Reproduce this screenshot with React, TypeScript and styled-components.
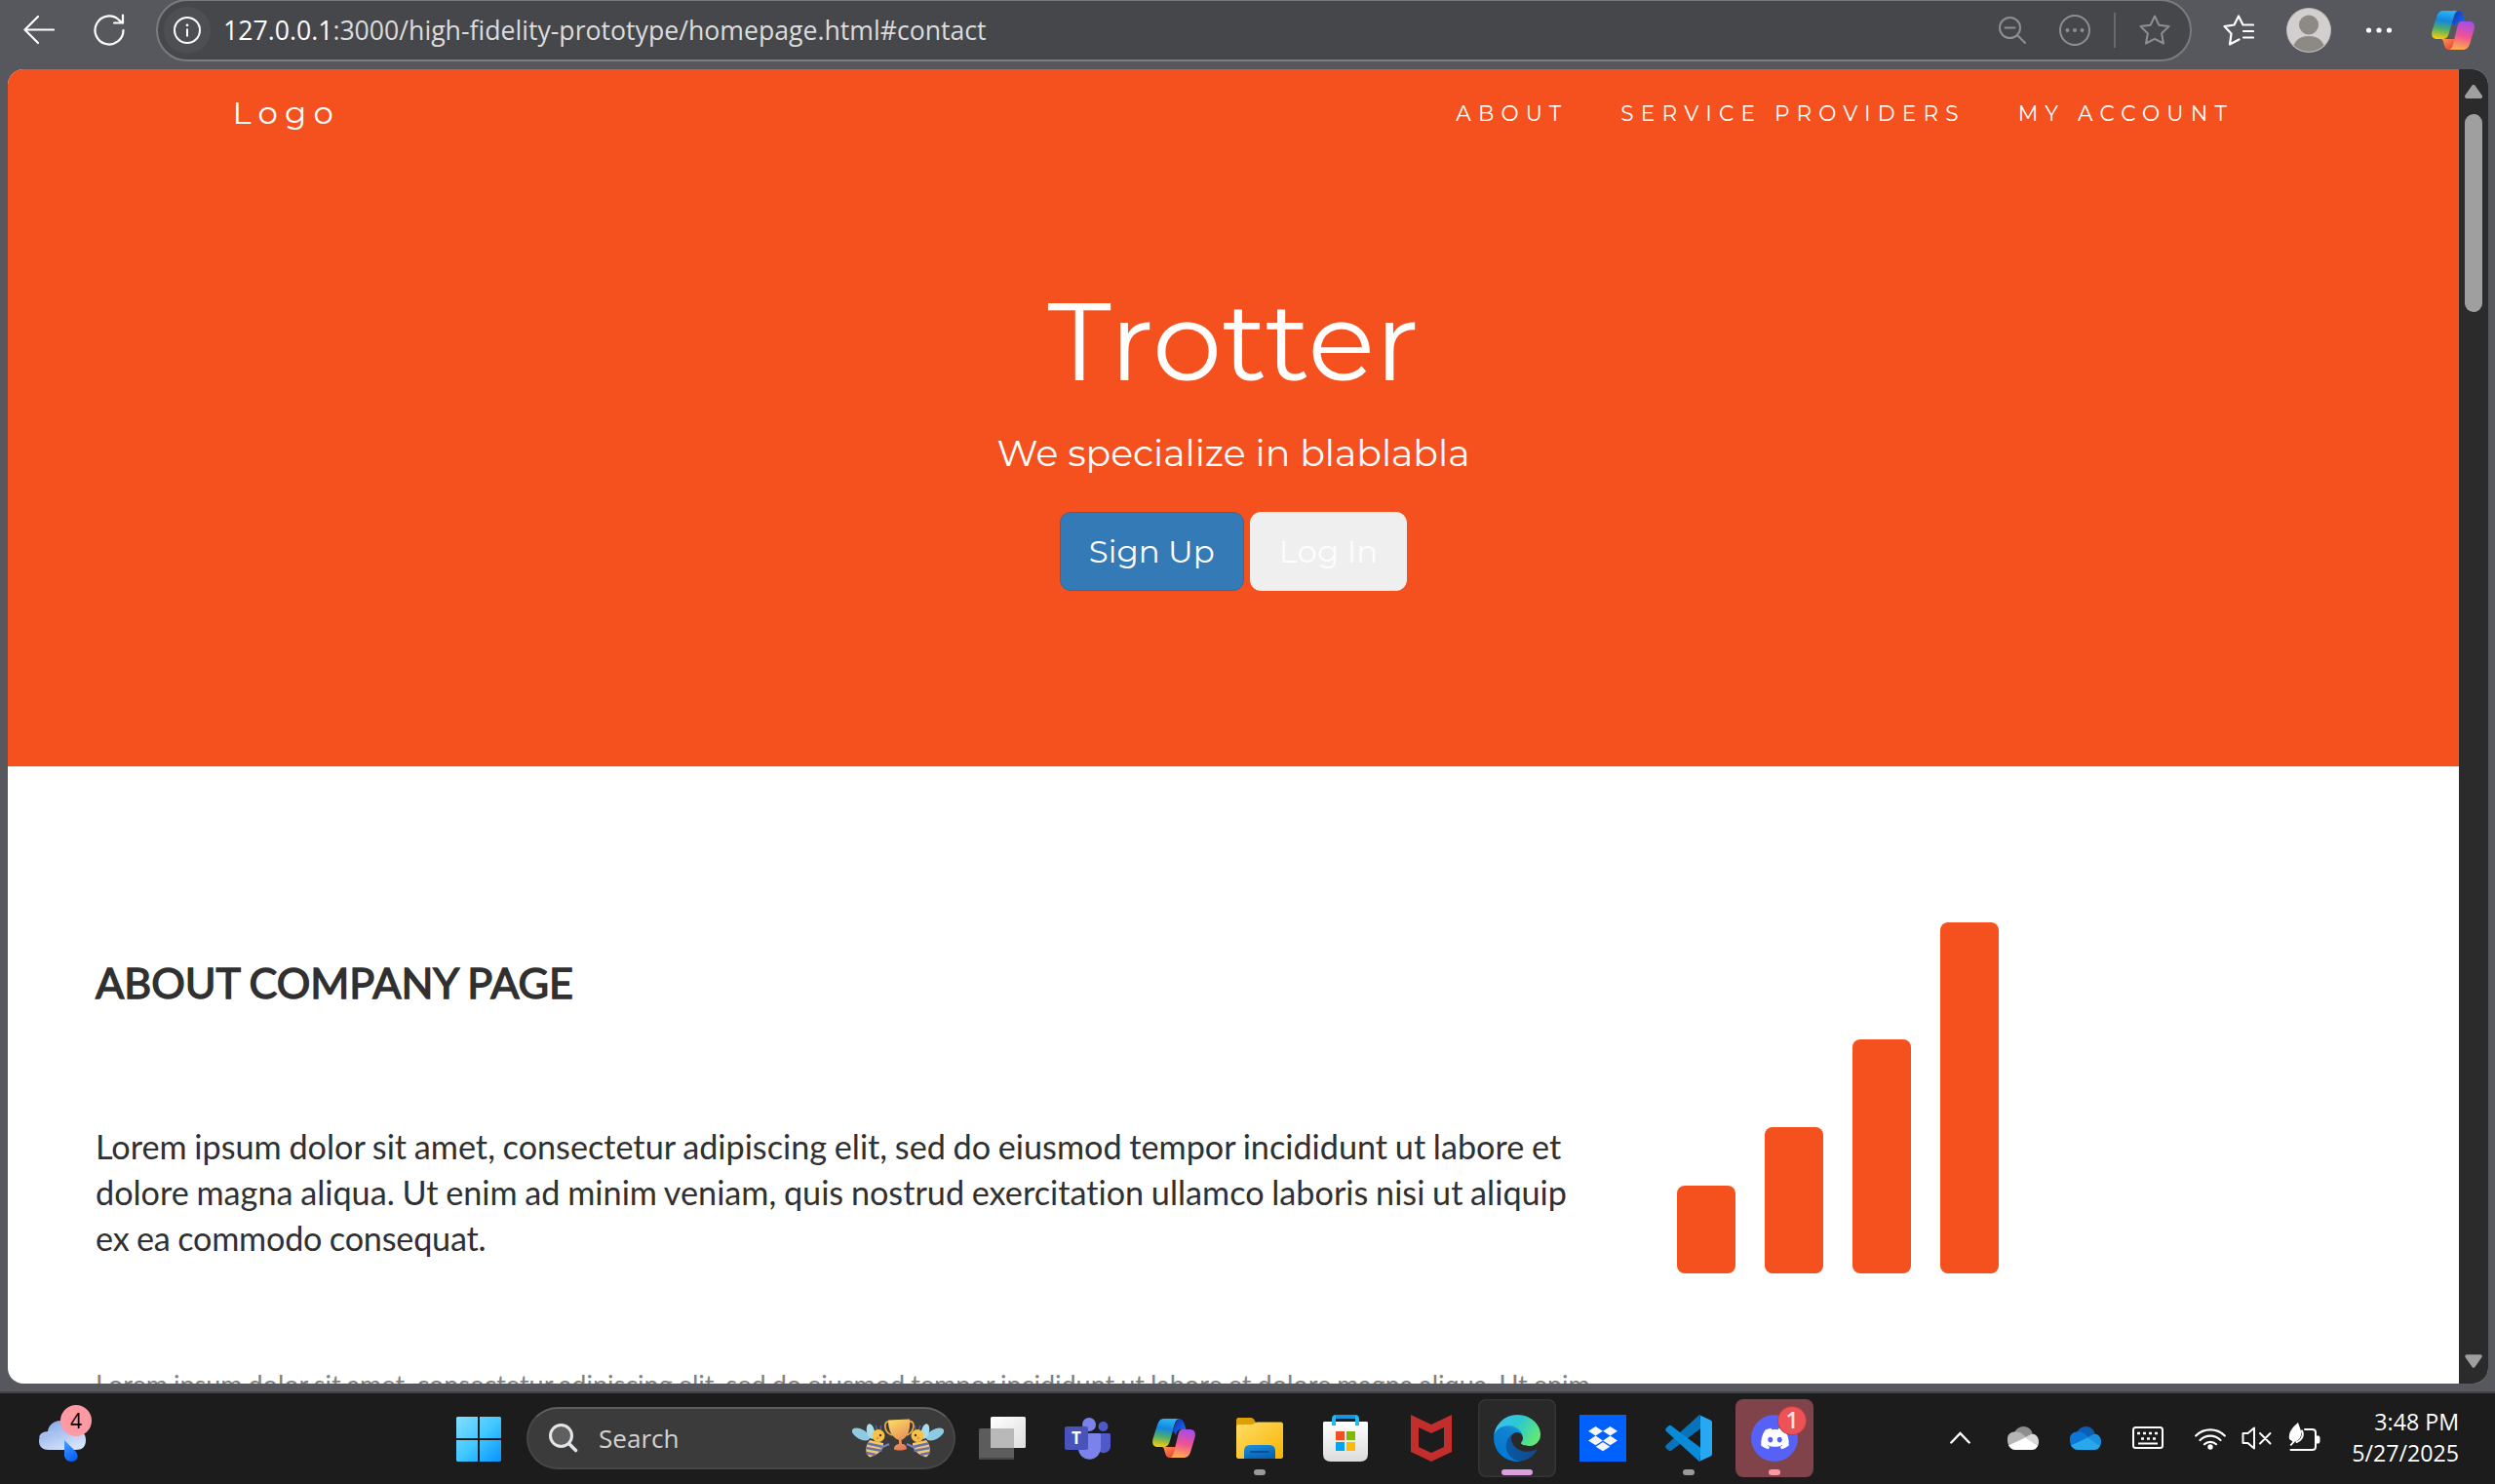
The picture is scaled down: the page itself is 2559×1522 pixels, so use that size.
import React from 'react';
import styled, { createGlobalStyle } from 'styled-components';
import { FaDiscord } from 'react-icons/fa';

const orange = '#f4511e';
const display = "Montserrat, Lato, 'Open Sans', sans-serif";
const system = "'Segoe UI', 'Open Sans', 'Noto Sans', sans-serif";

const GlobalStyle = createGlobalStyle`
  * { box-sizing: border-box; }
  html, body { margin: 0; padding: 0; overflow: hidden; background: #1c1c1c; }
  svg { display: block; flex: none; }
`;

const Screen = styled.div`
  width: 2559px;
  height: 1522px;
  display: flex;
  flex-direction: column;
  overflow: hidden;
`;

/* ---------- browser ---------- */
const Browser = styled.div`
  height: 1427px;
  flex: none;
  display: flex;
  flex-direction: column;
  background: #57585d;
`;

const Toolbar = styled.header`
  height: 71px;
  flex: none;
  display: flex;
  align-items: flex-start;
  padding-left: 24px;
`;

const Tool = styled.div<{ $w: number; $gap: number }>`
  width: ${(p) => p.$w}px;
  height: 62px;
  margin-left: ${(p) => p.$gap}px;
  display: flex;
  align-items: center;
  justify-content: center;
`;

const AddressBar = styled.div`
  width: 2088px;
  height: 64px;
  margin: -1px 0 0 32px;
  padding-left: 6px;
  border: 2px solid #7a7b7f;
  border-radius: 32px;
  background: #46474b;
  display: flex;
  align-items: center;
`;

const InfoButton = styled.div`
  width: 48px;
  height: 48px;
  border-radius: 50%;
  background: #4e4f53;
  display: flex;
  align-items: center;
  justify-content: center;
`;

const Url = styled.div`
  margin-left: 13px;
  flex: 1;
  color: #dcdcdc;
  font: 26.65px/40px ${system};
  white-space: nowrap;
  b { font-weight: 400; color: #fff; }
`;

const BarTool = styled.div<{ $mr: number }>`
  margin-right: ${(p) => p.$mr}px;
`;

const Divider = styled.div`
  width: 2px;
  height: 36px;
  margin-right: 24px;
  background: #69696a;
`;

const Viewport = styled.div`
  width: 2544px;
  height: 1348px;
  margin-left: 8px;
  display: flex;
  border-radius: 16px;
  overflow: hidden;
  background: #fff;
`;

const Page = styled.main`
  width: 2514px;
  overflow: hidden;
`;

const Scrollbar = styled.div`
  width: 30px;
  background: #2b2b2b;
  display: flex;
  flex-direction: column;
  align-items: center;
  padding: 16px 0;
`;

const Thumb = styled.div`
  width: 18px;
  height: 203px;
  margin: 16px 0 auto;
  border-radius: 9px;
  background: #9f9f9f;
`;

/* ---------- page ---------- */
const Hero = styled.section`
  height: 715px;
  background: ${orange};
  color: #fff;
  font-family: ${display};
`;

const Nav = styled.nav`
  height: 90px;
  padding: 0 231px 0 230.5px;
  display: flex;
  align-items: center;
  letter-spacing: 7.2px;
`;

const Logo = styled.span`
  font-size: 32.4px;
  line-height: 88px;
  margin-right: auto;
`;

const NavLink = styled.a`
  font-size: 21.6px;
  line-height: 90px;
  margin-left: 54px;
  white-space: nowrap;
`;

const HeroBody = styled.div`
  display: flex;
  flex-direction: column;
  align-items: center;
  padding-top: 123px;
`;

const Title = styled.h1`
  margin: 0;
  font-size: 113.4px;
  font-weight: 400;
  line-height: 130px;
`;

const Tagline = styled.p`
  margin: 25px 0 0;
  font-size: 37.8px;
  line-height: 50px;
`;

const Actions = styled.div`
  margin-top: 36px;
  display: flex;
  gap: 6.5px;
`;

const Button = styled.button<{ $primary?: boolean }>`
  width: ${(p) => (p.$primary ? 188.5 : 161)}px;
  height: 81px;
  padding: 0;
  border: 1px solid ${(p) => (p.$primary ? '#2e6da4' : '#efefef')};
  border-radius: 11px;
  background: ${(p) => (p.$primary ? '#337ab7' : '#efefef')};
  color: ${(p) => (p.$primary ? '#fff' : '#fdfdfd')};
  font: 32.4px/78px ${display};
  white-space: nowrap;
`;

const About = styled.section`
  display: flex;
  padding: 160px 0 0 90px;
  font-family: Lato, sans-serif;
  font-variant-ligatures: none;
`;

const Copy = styled.div`
  width: 1622px;
  padding-top: 31px;
`;

const Heading = styled.h2`
  margin: 0;
  color: #303030;
  font-size: 43.2px;
  font-weight: 400;
  line-height: 60px;
  word-spacing: -1.3px;
  -webkit-text-stroke: 1.4px #303030;
`;

const Lead = styled.p`
  margin: 114.5px 0 0;
  color: #303030;
  font-size: 34.2px;
  line-height: 47.03px;
  word-spacing: -0.03em;
  white-space: nowrap;
`;

const LastLine = styled.span`
  letter-spacing: -0.2px;
`;

const Body = styled.p`
  margin: 103px 0 0;
  color: #818181;
  font-size: 27px;
  line-height: 48.6px;
  word-spacing: -0.034em;
  white-space: nowrap;
`;

const Bars = styled.div`
  height: 360px;
  display: flex;
  align-items: flex-end;
  gap: 30px;
`;

const Bar = styled.div<{ $h: number }>`
  width: 60px;
  height: ${(p) => p.$h}px;
  border-radius: 8px;
  background: ${orange};
`;

/* ---------- taskbar ---------- */
const Taskbar = styled.footer`
  height: 95px;
  flex: none;
  display: flex;
  align-items: center;
  background: #1c1c1c;
  border-top: 2px solid #434346;
  font-family: ${system};
  color: #fff;
`;

const Weather = styled.div`
  width: 60px;
  margin: 0 372px 9px 36px;
`;

const SearchBox = styled.div`
  width: 440px;
  height: 64px;
  margin: 0 8px 1px 26px;
  padding: 0 10px 0 21px;
  border: 2px solid #474747;
  border-top-color: #5f5f5f;
  border-radius: 32px;
  background: #3b3b3b;
  display: flex;
  align-items: center;
`;

const SearchLabel = styled.span`
  margin: 0 auto 0 21px;
  font-size: 26.1px;
  line-height: 40px;
  color: #d2d2d2;
`;

const AppButton = styled.div<{ $state?: 'active' | 'alert' }>`
  position: relative;
  width: 80px;
  height: 80px;
  margin: 0 8px 1px 0;
  border-radius: 8px;
  display: flex;
  align-items: center;
  justify-content: center;
  background: ${(p) => (p.$state === 'active' ? '#292929' : p.$state === 'alert' ? '#80434a' : 'none')};
  box-shadow: ${(p) => (p.$state === 'active' ? 'inset 0 0 0 1.5px #353535' : 'none')};
`;

const Indicator = styled.i<{ $w: number; $c: string }>`
  position: absolute;
  left: calc(50% - ${(p) => p.$w / 2}px);
  bottom: 2px;
  width: ${(p) => p.$w}px;
  height: 6px;
  border-radius: 3px;
  background: ${(p) => p.$c};
`;

const DiscordDisc = styled.div`
  width: 48px;
  height: 48px;
  border-radius: 50%;
  background: #5662f6;
  display: flex;
  align-items: center;
  justify-content: center;
`;

const AlertBadge = styled.span`
  position: absolute;
  left: 44px;
  top: 8px;
  width: 28px;
  height: 28px;
  border-radius: 50%;
  background: #ed5257;
  box-shadow: 0 0 0 1px #b93f46;
  font: 600 23px/27px ${system};
  text-align: center;
  color: #fbe3e3;
`;

const Tray = styled.div`
  margin-left: 132px;
  display: flex;
  align-items: center;
`;

const TrayIcon = styled.div<{ $gap: number }>`
  margin: 0 ${(p) => p.$gap}px 2px 0;
`;

const Clock = styled.div`
  width: 109px;
  margin-bottom: 3px;
  display: flex;
  flex-direction: column;
  align-items: flex-end;
  font-size: 23.2px;
  line-height: 32px;
  white-space: nowrap;
`;

const CopilotIcon = ({ id }: { id: string }) => (
  <svg width="44" height="40" viewBox="0 0 44 40">
    <defs>
      <linearGradient id={`${id}a`} x1="0.5" y1="0" x2="0.35" y2="1">
        <stop offset="0" stopColor="#2bb4f5" />
        <stop offset="0.35" stopColor="#1486dd" />
        <stop offset="0.65" stopColor="#4fae6a" />
        <stop offset="1" stopColor="#f7cb0b" />
      </linearGradient>
      <linearGradient id={`${id}b`} x1="0.6" y1="0" x2="0.4" y2="1">
        <stop offset="0" stopColor="#a44ee8" />
        <stop offset="0.5" stopColor="#ee5293" />
        <stop offset="1" stopColor="#ffb04a" />
      </linearGradient>
      <linearGradient id={`${id}c`} x1="0" y1="0" x2="1" y2="1">
        <stop offset="0" stopColor="#0a2fbf" />
        <stop offset="1" stopColor="#2273ea" />
      </linearGradient>
      <linearGradient id={`${id}d`} x1="0" y1="0" x2="1" y2="1">
        <stop offset="0" stopColor="#ff9a4d" />
        <stop offset="1" stopColor="#e8363a" />
      </linearGradient>
    </defs>
    <path d="M26 0C31 0 32 3 33 6L34.500 11H30C26 11 25 13 24 17L21 12Z" fill={`url(#${id}c)`} />
    <path d="M9.500 29C12 29 12 32 13 35C14 38.500 15 40 18 40L23 38L24 29Z" fill={`url(#${id}d)`} />
    <path d="M12 0H28C24.500 0 23.500 3 22.500 6.500L18 22.500C16.500 27.500 15 29 11 29H6C1 29-1 26 0.700 20L5 6.500C6.500 2 8.500 0 12 0Z" fill={`url(#${id}a)`} />
    <path d="M31 11H38C43 11 45 14 43.300 20L39.300 33.500C38 38 35.500 40 32 40H17C20.500 40 21.300 37 22.200 33.500L26 18C27.200 13 28 11 31 11Z" fill={`url(#${id}b)`} />
  </svg>
);

const CloudIcon = ({ c }: { c: string[] }) => (
  <svg width="32" height="24" viewBox="0 0 32 24">
    <path d="M7 7C8 3 12 0 16.500 0C21 0 24.500 3 25.500 7L18 12Z" fill={c[0]} />
    <path d="M7 5.500C10 5 13 6 15.500 8L20 11.500L1.500 20C-2 13 0 6 7 5.500Z" fill={c[1]} />
    <path d="M17 12L24.500 7.500C29 7.500 32 11 32 15.500C32 17.500 31.500 19.500 30.500 21Z" fill={c[2]} />
    <path d="M18 11.500L30.800 20C29.500 23 27.500 24 25 24H8C5 24 2.500 22 1 19.500Z" fill={c[3]} />
  </svg>
);

const Bee = () => (
  <g>
    <ellipse cx="9" cy="16" rx="10" ry="5" transform="rotate(28 9 16)" fill="#8ecbe2" />
    <ellipse cx="19" cy="13" rx="4" ry="8" transform="rotate(-12 19 13)" fill="#a9dcec" />
    <path d="M26 12L24 7M29 12L29.500 7" stroke="#5a62a0" strokeWidth="1.200" />
    <path d="M18 22L32 25C33 32 26 37 18 39.500C13 36 13 28 18 22Z" fill="#f6c869" />
    <path d="M16 25.500L32 29M14.500 30L30.500 33M14.500 35L24 37" stroke="#6672ae" strokeWidth="2.600" />
    <path d="M29 30L38 26" stroke="#7480c4" strokeWidth="2" />
    <circle cx="27" cy="17.500" r="6.500" fill="#f8c243" />
    <circle cx="29" cy="17" r="1.200" fill="#3b3041" />
    <circle cx="26" cy="20" r="1.300" fill="#ef8a62" />
  </g>
);

const BeesTrophy = () => (
  <svg width="94" height="40" viewBox="0 0 94 40">
    <defs>
      <linearGradient id="cup" x1="0.300" y1="0" x2="0.700" y2="1">
        <stop offset="0" stopColor="#fbd661" />
        <stop offset="1" stopColor="#e0765a" />
      </linearGradient>
    </defs>
    <Bee />
    <g transform="translate(94 0) scale(-1 1)"><Bee /></g>
    <path d="M38 3C32 2 32 14 41 17M58 3C65 1 65 13 56 17" fill="none" stroke="#e8a548" strokeWidth="1.800" />
    <path d="M37 1.500L59 0.500C60 12 57 19 50.500 22L51 26C54 26 56 28 56 31C52 33 46 33 43 31.500C43 28 45 26.500 48 26L48 22C40 19 37 11 37 1.500Z" fill="url(#cup)" />
  </svg>
);

export default function App() {
  return (
    <Screen>
      <GlobalStyle />
      <Browser>
        <Toolbar>
          <Tool $w={32} $gap={0}>
            <svg width="32" height="30" viewBox="0 0 32 30" fill="none" stroke="#fff" strokeWidth="2.200" strokeLinecap="round" strokeLinejoin="round">
              <path d="M31 14.500H1.500M15 1L1.500 14.500L15 28" />
            </svg>
          </Tool>
          <Tool $w={32} $gap={40}>
            <svg width="32" height="34" viewBox="0 0 32 34" fill="none" stroke="#fff" strokeWidth="2.200" strokeLinecap="round">
              <path d="M30.500 17A14.500 14.500 0 1 1 26 6.500L29.500 9.500M30 1.500V9.500H21" />
            </svg>
          </Tool>
          <AddressBar>
            <InfoButton>
              <svg width="28" height="28" viewBox="0 0 28 28" fill="none" stroke="#fff" strokeWidth="2">
                <circle cx="14" cy="14" r="13" />
                <path d="M14 12.500V20.500" />
                <circle cx="14" cy="8.800" r="1.400" fill="#fff" stroke="none" />
              </svg>
            </InfoButton>
            <Url><b>127.0.0.1</b>:3000/high-fidelity-prototype/homepage.html#contact</Url>
            <BarTool $mr={34}>
              <svg width="28" height="28" viewBox="0 0 28 28" fill="none" stroke="#8f8f90" strokeWidth="2" strokeLinecap="round">
                <circle cx="11.500" cy="11.500" r="10.500" />
                <path d="M6.500 11.500H16.500M19 19L27 27" />
              </svg>
            </BarTool>
            <BarTool $mr={24}>
              <svg width="32" height="32" viewBox="0 0 32 32" fill="none" stroke="#8f8f90" strokeWidth="2">
                <circle cx="16" cy="16" r="15" />
                <g fill="#8f8f90" stroke="none">
                  <circle cx="8.500" cy="16" r="2" /><circle cx="16" cy="16" r="2" /><circle cx="23.500" cy="16" r="2" />
                </g>
              </svg>
            </BarTool>
            <Divider />
            <BarTool $mr={20}>
              <svg width="32" height="32" viewBox="0 0 32 32" fill="none" stroke="#8f8f90" strokeWidth="2" strokeLinejoin="round">
                <path d="M16 1.500L20.400 10.700L30.500 12.100L23.100 19.200L25 29.500L16 24.800L7 29.500L8.900 19.200L1.500 12.100L11.600 10.700Z" />
              </svg>
            </BarTool>
          </AddressBar>
          <Tool $w={32} $gap={32}>
            <svg width="32" height="32" viewBox="0 0 32 32" fill="none" stroke="#fff" strokeWidth="2.200" strokeLinejoin="round" strokeLinecap="round">
              <path d="M31 10.500H20.500L16 1.500L11.500 10.500L1.500 12L8.500 19.500L7 30.500L16.500 25.500M21 17H31M21 23.500H31" />
            </svg>
          </Tool>
          <Tool $w={46} $gap={33}>
            <svg width="46" height="46" viewBox="0 0 46 46">
              <clipPath id="face"><circle cx="23" cy="23" r="22" /></clipPath>
              <circle cx="23" cy="23" r="23" fill="#c0bebb" />
              <circle cx="23" cy="23" r="22" fill="#d2d0ce" />
              <g clipPath="url(#face)" fill="#8d8985">
                <circle cx="23" cy="17.500" r="10" />
                <path d="M6 46C6 35 13 29 23 29C33 29 40 35 40 46Z" />
              </g>
            </svg>
          </Tool>
          <Tool $w={28} $gap={35}>
            <svg width="28" height="6" viewBox="0 0 28 6" fill="#fff">
              <circle cx="3.500" cy="3" r="2.600" /><circle cx="14" cy="3" r="2.600" /><circle cx="24.500" cy="3" r="2.600" />
            </svg>
          </Tool>
          <Tool $w={44} $gap={40}><CopilotIcon id="top" /></Tool>
        </Toolbar>
        <Viewport>
          <Page>
            <Hero>
              <Nav>
                <Logo>Logo</Logo>
                <NavLink>ABOUT</NavLink>
                <NavLink>SERVICE PROVIDERS</NavLink>
                <NavLink>MY ACCOUNT</NavLink>
              </Nav>
              <HeroBody>
                <Title>Trotter</Title>
                <Tagline>We specialize in blablabla</Tagline>
                <Actions>
                  <Button $primary>Sign Up</Button>
                  <Button>Log In</Button>
                </Actions>
              </HeroBody>
            </Hero>
            <About>
              <Copy>
                <Heading>ABOUT COMPANY PAGE</Heading>
                <Lead>
                  Lorem ipsum dolor sit amet, consectetur adipiscing elit, sed do eiusmod tempor incididunt ut labore et<br />
                  dolore magna aliqua. Ut enim ad minim veniam, quis nostrud exercitation ullamco laboris nisi ut aliquip<br />
                  <LastLine>ex ea commodo consequat.</LastLine>
                </Lead>
                <Body>Lorem ipsum dolor sit amet, consectetur adipiscing elit, sed do eiusmod tempor incididunt ut labore et dolore magna aliqua. Ut enim</Body>
              </Copy>
              <Bars>
                {[90, 150, 240, 360].map((h) => <Bar key={h} $h={h} />)}
              </Bars>
            </About>
          </Page>
          <Scrollbar>
            <svg width="18" height="14" viewBox="0 0 18 14"><path d="M9 2L16 12H2Z" fill="#9f9f9f" stroke="#9f9f9f" strokeWidth="4" strokeLinejoin="round" /></svg>
            <Thumb />
            <svg width="18" height="14" viewBox="0 0 18 14"><path d="M9 12L16 2H2Z" fill="#9f9f9f" stroke="#9f9f9f" strokeWidth="3.500" strokeLinejoin="round" /></svg>
          </Scrollbar>
        </Viewport>
      </Browser>
      <Taskbar>
        <Weather>
          <svg width="60" height="66" viewBox="0 0 60 66">
            <defs>
              <linearGradient id="cl" x1="0" y1="0" x2="0.600" y2="1"><stop offset="0" stopColor="#7fa2e6" /><stop offset="1" stopColor="#d5e3fa" /></linearGradient>
              <linearGradient id="dr" x1="0" y1="0" x2="0.500" y2="1"><stop offset="0" stopColor="#4aa0ff" /><stop offset="1" stopColor="#0b62f5" /></linearGradient>
            </defs>
            <path d="M14 49C8 49 4 46 4 40C4 34 8 31 13 31C13 24 19 19 26 19C32 19 37 23 38 28C46 27 52 31 52 39C52 46 48 49 42 49Z" fill="url(#cl)" />
            <path d="M5 36C7 30 19 28 25 37" fill="none" stroke="#a9c3f1" strokeWidth="2" />
            <path d="M30 39L42 51C46 57 42 61 37 61C33 61 30 58 30 54Z" fill="url(#dr)" />
            <circle cx="42" cy="19" r="16" fill="#ff99a4" />
            <text x="42" y="26.500" textAnchor="middle" fontFamily="Open Sans, sans-serif" fontSize="21" fill="#000">4</text>
          </svg>
        </Weather>
        <svg width="46" height="46" viewBox="0 0 46 46">
          <defs><linearGradient id="win" gradientUnits="userSpaceOnUse" x1="0" y1="0" x2="46" y2="46"><stop offset="0" stopColor="#85deff" /><stop offset="0.500" stopColor="#40c8ff" /><stop offset="1" stopColor="#0893ff" /></linearGradient></defs>
          <path d="M1 0H22V22H0V1ZM24 0H45L46 1V22H24ZM0 24H22V46H1L0 45ZM24 24H46V45L45 46H24Z" fill="url(#win)" />
        </svg>
        <SearchBox>
          <svg width="30" height="30" viewBox="0 0 30 30" fill="none" stroke="#e3e6e8" strokeLinecap="round">
            <circle cx="12.500" cy="12.500" r="11" strokeWidth="3" fill="#606060" />
            <path d="M21 21L27.500 27.500" strokeWidth="3.600" />
          </svg>
          <SearchLabel>Search</SearchLabel>
          <BeesTrophy />
        </SearchBox>
        <AppButton>
          <svg width="48" height="44" viewBox="0 0 48 44">
            <defs><linearGradient id="tv" x1="0" y1="0" x2="1" y2="1"><stop offset="0" stopColor="#fff" /><stop offset="1" stopColor="#dedede" /></linearGradient></defs>
            <rect x="12" width="36" height="32" rx="1.500" fill="url(#tv)" />
            <rect y="12" width="36" height="32" rx="1.500" fill="#5c5c5c" />
            <path d="M12 12H36V32H12Z" fill="#b9b9b9" />
            <path d="M0 42H36V43L35 44H1Z" fill="#474747" />
          </svg>
        </AppButton>
        <AppButton>
          <svg width="48" height="44" viewBox="0 0 48 44">
            <circle cx="39.500" cy="10" r="5" fill="#5059c9" />
            <path d="M34 17H45.500Q47 17 47 18.500V30A7 7 0 0 1 35 35Z" fill="#5059c9" />
            <circle cx="25" cy="8" r="7" fill="#7b83eb" />
            <path d="M14 17H35.500Q37 17 37 18.500V31.500A11.500 11.500 0 0 1 14 33Z" fill="#7b83eb" />
            <rect y="10" width="24" height="24" rx="2" fill="#4a52bb" />
            <text x="12" y="28" textAnchor="middle" fontFamily="Open Sans, sans-serif" fontWeight="700" fontSize="17" fill="#fff">T</text>
          </svg>
        </AppButton>
        <AppButton><CopilotIcon id="task" /></AppButton>
        <AppButton>
          <svg width="48" height="42" viewBox="0 0 48 42">
            <defs>
              <linearGradient id="fo" x1="0" y1="0" x2="1" y2="1"><stop offset="0" stopColor="#ffdc69" /><stop offset="1" stopColor="#f8b500" /></linearGradient>
              <linearGradient id="fb" x1="0" y1="0" x2="0.500" y2="1"><stop offset="0" stopColor="#1b93de" /><stop offset="1" stopColor="#0763b5" /></linearGradient>
            </defs>
            <path d="M0 1.500L1.500 0H15Q17 0 18 1.500L20 5V12H0Z" fill="#dd9f06" />
            <path d="M0 8.500L1.500 7H14Q17 7 19 5.500Q20 4.500 22 4.500H46.500L48 6V40.500L46.500 42H1.500L0 40.500Z" fill="url(#fo)" />
            <path d="M8 42V34Q8 28 14 28H34Q40 28 40 34V42Z" fill="url(#fb)" />
            <path d="M15 35H33" stroke="#0b4f98" strokeWidth="2" strokeLinecap="round" />
          </svg>
          <Indicator $w={12} $c="#999" />
        </AppButton>
        <AppButton>
          <svg width="46" height="48" viewBox="0 0 46 48">
            <defs><linearGradient id="bag" x1="0" y1="0" x2="0" y2="1"><stop offset="0" stopColor="#fff" /><stop offset="1" stopColor="#dcdcdc" /></linearGradient></defs>
            <path d="M1 7H45L46 8V40Q46 48 38 48H8Q0 48 0 40V8Z" fill="url(#bag)" />
            <path d="M11 11V4.500Q11 2 13 2H33Q35 2 35 4.500V11" fill="none" stroke="#1dbbf4" strokeWidth="4" />
            <path d="M13 2H33" stroke="#1594e3" strokeWidth="4" />
            <rect x="13" y="17" width="9" height="9" fill="#f25022" />
            <rect x="24" y="17" width="9" height="9" fill="#7fba00" />
            <rect x="13" y="28" width="9" height="9" fill="#00a4ef" />
            <rect x="24" y="28" width="9" height="9" fill="#ffb900" />
          </svg>
        </AppButton>
        <AppButton>
          <svg width="42" height="48" viewBox="0 0 42 48">
            <path fillRule="evenodd" d="M0 0L21 10L42 0V38L21 48L0 38ZM8 13V33L21 39L34 33V13L21 19Z" fill="#c12e2c" />
          </svg>
        </AppButton>
        <AppButton $state="active">
          <svg width="48" height="48" viewBox="4.600 4.900 256 256">
            <defs>
              <linearGradient id="e1" x1="0" y1="0.500" x2="1" y2="0.500"><stop offset="0" stopColor="#0c59a4" /><stop offset="1" stopColor="#114a8b" /></linearGradient>
              <linearGradient id="e2" x1="0.800" y1="0" x2="0.300" y2="1"><stop offset="0" stopColor="#1b9de2" /><stop offset="0.300" stopColor="#1280cf" /><stop offset="1" stopColor="#0078d4" /></linearGradient>
              <linearGradient id="e3" x1="0" y1="0.300" x2="1" y2="0.700"><stop offset="0" stopColor="#35c1f1" /><stop offset="0.450" stopColor="#2cc9cf" /><stop offset="1" stopColor="#66eb6e" /></linearGradient>
            </defs>
            <path fill="url(#e1)" d="M235.680 195.460a93.730 93.730 0 0 1-10.540 4.710 101.870 101.870 0 0 1-35.900 6.460c-47.320 0-88.540-32.550-88.540-74.320A31.480 31.480 0 0 1 117.130 105c-42.800 1.800-53.800 46.400-53.800 72.530 0 73.880 68.090 81.370 82.760 81.370 7.910 0 19.840-2.300 27-4.560l1.310-.44a128.340 128.340 0 0 0 66.600-52.800 4 4 0 0 0-5.320-5.640Z" />
            <path fill="url(#e2)" d="M110.340 246.340A79.200 79.200 0 0 1 87.600 225a80.720 80.720 0 0 1 29.530-120c3.120-1.470 8.450-4.130 15.540-4a32.350 32.350 0 0 1 25.690 13 31.880 31.880 0 0 1 6.360 18.660c0-.21 24.460-79.600-80-79.600-43.900 0-80 41.660-80 78.210a130.150 130.150 0 0 0 12.110 56 128 128 0 0 0 156.380 67.110 75.550 75.550 0 0 1-62.780-8Z" />
            <path fill="url(#e3)" d="M156.940 153.780c-.81 1.050-3.300 2.500-3.300 5.660 0 2.610 1.700 5.120 4.720 7.230 14.380 10 41.490 8.680 41.560 8.680a59.560 59.560 0 0 0 30.270-8.350 61.380 61.380 0 0 0 30.430-52.880c.26-22.410-8-37.310-11.340-43.910C228.090 28.760 182.350 4.920 132.610 4.920a128 128 0 0 0-128 126.200c.48-36.540 36.800-66.050 80-66.050 3.500 0 23.460.34 42 10.070 16.340 8.580 24.900 18.940 30.850 29.210 6.180 10.670 7.280 24.150 7.280 29.520s-2.740 13.330-7.800 19.910Z" />
          </svg>
          <Indicator $w={32} $c="#dc9fe0" />
        </AppButton>
        <AppButton>
          <svg width="48" height="48" viewBox="0 0 48 48">
            <rect width="48" height="48" fill="#0061ff" />
            <path d="M16.500 12L24 16.800L16.500 21.600L9 16.800ZM31.500 12L39 16.800L31.500 21.600L24 16.800ZM16.500 21.600L24 26.400L16.500 31.200L9 26.400ZM31.500 21.600L39 26.400L31.500 31.200L24 26.400ZM24 28L31.300 32.700L24 37.300L16.700 32.700Z" fill="#f7f5f2" />
          </svg>
        </AppButton>
        <AppButton>
          <svg width="48" height="48" viewBox="0 0 48 48">
            <path d="M35 0L1 31Q-.5 32.500 1 34.500L3.300 36.600Q4.800 37.800 6.500 36.600L37 13.500Z" fill="#0673ba" />
            <path d="M35 48L1 17Q-.5 15.500 1 13.500L3.300 11.400Q4.800 10.200 6.500 11.400L37 34.500Z" fill="#0a8bd8" />
            <path d="M34.500 0L46.500 5.500Q48 6.300 48 8V40Q48 41.700 46.500 42.500L34.500 48L36 46V2Z" fill="#27a8f2" />
          </svg>
          <Indicator $w={12} $c="#999" />
        </AppButton>
        <AppButton $state="alert">
          <DiscordDisc><FaDiscord size={31} color="#fff" /></DiscordDisc>
          <AlertBadge>1</AlertBadge>
          <Indicator $w={12} $c="#ff99a4" />
        </AppButton>
        <Tray>
          <TrayIcon $gap={38}>
            <svg width="21" height="13" viewBox="0 0 21 13" fill="none" stroke="#fff" strokeWidth="2.400" strokeLinecap="round"><path d="M1.300 11.500L10.500 2L19.700 11.500" /></svg>
          </TrayIcon>
          <TrayIcon $gap={32}><CloudIcon c={['#8d8d8d', '#b5b5b5', '#dadada', '#ffffff']} /></TrayIcon>
          <TrayIcon $gap={32}><CloudIcon c={['#0a5fb4', '#0a78d6', '#1a90e0', '#28a8ea']} /></TrayIcon>
          <TrayIcon $gap={32}>
            <svg width="32" height="24" viewBox="0 0 32 24" fill="none" stroke="#fff" strokeWidth="2">
              <rect x="1" y="1" width="30" height="21" rx="2.500" />
              <path d="M6 17.500H26" />
              <path d="M5 7H8M11 7H14M17 7H20M23 7H26M9 12.500H12M15 12.500H18M21 12.500H24" strokeWidth="2.600" />
            </svg>
          </TrayIcon>
          <TrayIcon $gap={16}>
            <svg width="32" height="24" viewBox="0 0 32 24" fill="none" stroke="#fff" strokeWidth="2.200" strokeLinecap="round">
              <path d="M1.200 9.500A20.900 20.900 0 0 1 30.800 9.500M5.500 14A14.800 14.800 0 0 1 26.500 14M10 18.300A8.500 8.500 0 0 1 22 18.300" />
              <circle cx="16" cy="21" r="2.700" fill="#fff" stroke="none" />
            </svg>
          </TrayIcon>
          <TrayIcon $gap={17}>
            <svg width="31" height="24" viewBox="0 0 31 24" fill="none" stroke="#fff" strokeWidth="2" strokeLinecap="round" strokeLinejoin="round">
              <path d="M13 1.500V22.500L6.500 17H1.500V7H6.500ZM19 7L29.500 17.500M29.500 7L19 17.500" />
            </svg>
          </TrayIcon>
          <TrayIcon $gap={33}>
            <svg width="33" height="34" viewBox="0 0 33 34" fill="none" stroke="#fff" strokeWidth="2" strokeLinecap="round">
              <path d="M17 8H24.500Q28 8 28 11V25.500Q28 29 24.500 29H2.500" />
              <path d="M28.500 14.500H31.500L32.500 16.500V20.500L31.500 22.500H28.500Z" fill="#fff" stroke="none" />
              <path d="M10 1C4 6 0 11 1 18L4.500 20.500L1.500 24L3 25L7 20.500C12 19 14.500 14 12.500 8Z" fill="#fff" stroke="none" />
              <path d="M14 9.500C16.500 15 13 19.500 8.500 21" />
            </svg>
          </TrayIcon>
          <Clock><span>3:48 PM</span><span>5/27/2025</span></Clock>
        </Tray>
      </Taskbar>
    </Screen>
  );
}
